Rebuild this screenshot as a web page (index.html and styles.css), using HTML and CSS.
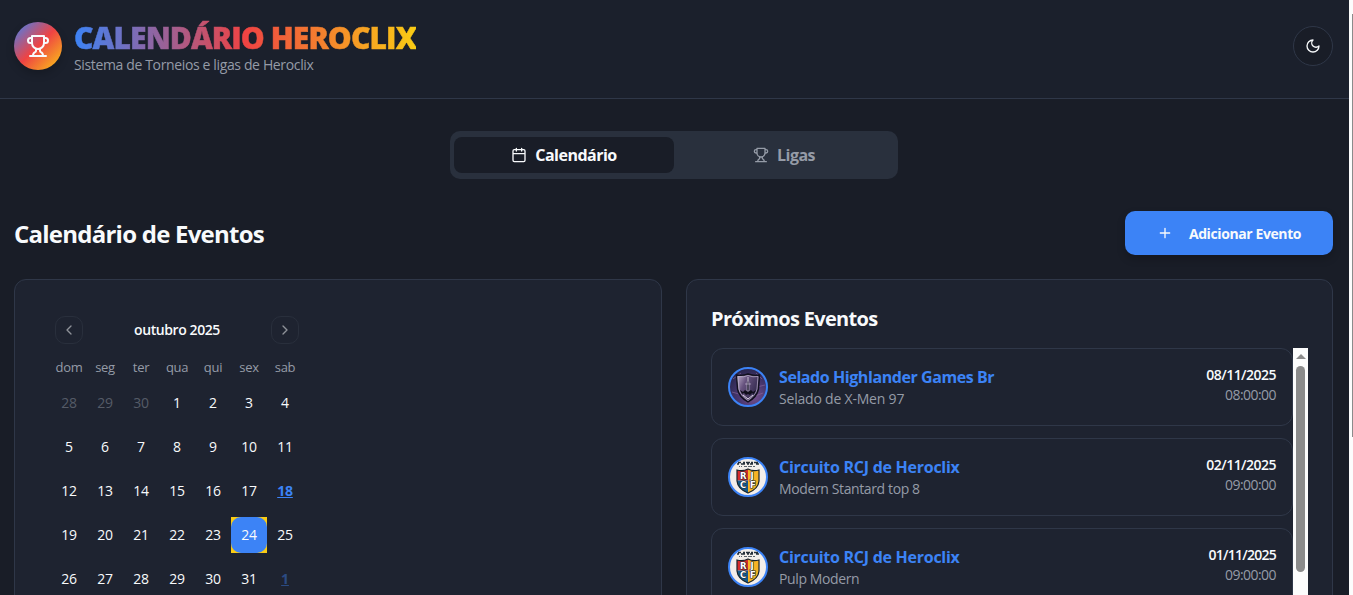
FILE: index.html
```html
<!DOCTYPE html>
<html lang="pt-BR">
<head>
<meta charset="utf-8">
<title>Calendário Heroclix</title>
<link rel="stylesheet" href="styles.css">
</head>
<body>
<svg width="0" height="0" class="defs">
  <defs>
    <symbol id="trophy" viewBox="0 0 24 24"><path d="M6 9H4.5a2.5 2.5 0 0 1 0-5H6M18 9h1.5a2.5 2.5 0 0 0 0-5H18M4 22h16M10 14.66V17c0 .55-.47.98-.97 1.21C7.85 18.75 7 20.24 7 22M14 14.66V17c0 .55.47.98.97 1.21C16.15 18.75 17 20.24 17 22M18 2H6v7a6 6 0 0 0 12 0V2Z"/></symbol>
    <radialGradient id="nebula" cx=".65" cy=".75" r=".8"><stop offset="0" stop-color="#75508c"/><stop offset=".5" stop-color="#47366f"/><stop offset="1" stop-color="#252448"/></radialGradient>
    <linearGradient id="steel" x2="1" y2=".6"><stop offset="0" stop-color="#c6b8d2"/><stop offset=".4" stop-color="#66527e"/><stop offset="1" stop-color="#2d2548"/></linearGradient>
    <clipPath id="crest"><path d="M9 13Q15 14.500 20 12Q25 14.500 31 13V24C30.500 30 25 34 20 36C15 34 9.500 30 9 24Z"/></clipPath>
    <symbol id="rcj" viewBox="0 0 40 40">
      <circle cx="20" cy="20" r="19" fill="#f3eeea" stroke="#3c83f6" stroke-width="2"/>
      <path d="M10 5.500h3M15 5.500h2M18 5.500h4M23 5.500h2M26 5.500h4M9 7h2M13 7h4M19 7h2M22 7h3M28 7h3" stroke="#26303a" stroke-width="1.300"/>
      <path d="M11 9.500h1M13 9.500h1M16 9.500h3M20 9.500h4M25 9.500h2" stroke="#5b636b"/>
      <g clip-path="url(#crest)"><path fill="#d72b2b" d="M8 11h12v12.500H8z"/><path fill="#f5b324" d="M20 11h12v26H20z"/><path fill="#155a8b" d="M8 23.500h12V37H8z"/></g>
      <path d="M9 13Q15 14.500 20 12Q25 14.500 31 13V24C30.500 30 25 34 20 36C15 34 9.500 30 9 24Z" fill="none" stroke="#17232b" stroke-width="1.200"/>
      <g class="crest-text"><text x="12" y="22">R</text><text x="22.500" y="22">J</text><text x="12" y="31">C</text><text x="22" y="31">F</text></g>
    </symbol>
  </defs>
</svg>
<header class="header">
  <div class="brand">
    <div class="logo"><svg class="icon icon-lg"><use href="#trophy"/></svg></div>
    <div class="brand-text">
      <h1><span>CALENDÁRIO HEROCLIX</span></h1>
      <p>Sistema de Torneios e ligas de Heroclix</p>
    </div>
  </div>
  <button class="theme"><svg class="icon" viewBox="0 0 24 24"><path d="M12 3a6 6 0 0 0 9 9 9 9 0 1 1-9-9Z"/></svg></button>
</header>
<main class="main">
  <nav class="tabs">
    <button class="tab active"><svg class="icon" viewBox="0 0 24 24"><path d="M8 2v4M16 2v4M3 10h18M5 4h14a2 2 0 0 1 2 2v14a2 2 0 0 1-2 2H5a2 2 0 0 1-2-2V6a2 2 0 0 1 2-2Z"/></svg><span>Calendário</span></button>
    <button class="tab"><svg class="icon"><use href="#trophy"/></svg><span>Ligas</span></button>
  </nav>
  <div class="heading">
    <h2>Calendário de Eventos</h2>
    <button class="add"><svg class="icon" viewBox="0 0 24 24"><path d="M5 12h14M12 5v14"/></svg><span>Adicionar Evento</span></button>
  </div>
  <div class="columns">
    <section class="card calendar">
      <div class="month">
        <button class="nav"><svg class="icon" viewBox="0 0 24 24"><path d="m15 18-6-6 6-6"/></svg></button>
        <strong>outubro 2025</strong>
        <button class="nav"><svg class="icon" viewBox="0 0 24 24"><path d="m9 18 6-6-6-6"/></svg></button>
      </div>
      <div class="week names"><span>dom</span><span>seg</span><span>ter</span><span>qua</span><span>qui</span><span>sex</span><span>sab</span></div>
      <div class="week"><span class="out">28</span><span class="out">29</span><span class="out">30</span><span>1</span><span>2</span><span>3</span><span>4</span></div>
      <div class="week"><span>5</span><span>6</span><span>7</span><span>8</span><span>9</span><span>10</span><span>11</span></div>
      <div class="week"><span>12</span><span>13</span><span>14</span><span>15</span><span>16</span><span>17</span><span class="event">18</span></div>
      <div class="week"><span>19</span><span>20</span><span>21</span><span>22</span><span>23</span><span class="today"><b>24</b></span><span>25</span></div>
      <div class="week"><span>26</span><span>27</span><span>28</span><span>29</span><span>30</span><span>31</span><span class="event faded">1</span></div>
    </section>
    <section class="card upcoming">
      <h3>Próximos Eventos</h3>
      <div class="scroll">
        <div class="list">
          <article class="item">
            <svg class="avatar" viewBox="0 0 40 40"><circle cx="20" cy="20" r="19" fill="url(#nebula)"/><path d="M5 12l8-6M28 6l6 6M4 25l7 2M27 29l8-3M29 20l8-2" stroke="#8e6aa0" opacity=".6"/><path d="M8.500 8Q15 9 20 7Q26 9 31.500 8L30.500 22Q29 30 20 35Q11 30 9.500 22Z" fill="url(#steel)" stroke="#11101e" stroke-width="1.400"/><path d="M10 9.500Q16 10.500 20 8.500Q25 10.500 30 9.500L29 22Q28 28 20 33.500Q12 28 11 22Z" fill="none" stroke="#c0b4cf" stroke-width=".7"/><path d="M20 10l1 7v7h-2v-7ZM17 17h6" fill="#17142a" stroke="#cfc3da" stroke-width=".6"/><path d="M12 23l3 2 2-2 3 2 3-2 2 2 3-2-2 4-2-1-2 2-2-1-2 1-2-2-2 1Z" fill="#0f0e1b"/><path d="M15 28l5 4 5-4" stroke="#ddd5e6" fill="none"/><circle cx="20" cy="20" r="19" fill="none" stroke="#3c83f6" stroke-width="2"/></svg>
            <div class="info"><h4>Selado Highlander Games Br</h4><p class="loose">Selado de X-Men 97</p></div>
            <div class="when"><strong>08/11/2025</strong><span>08:00:00</span></div>
          </article>
          <article class="item">
            <svg class="avatar"><use href="#rcj"/></svg>
            <div class="info"><h4 class="rcj-title">Circuito RCJ de Heroclix</h4><p>Modern Stantard top 8</p></div>
            <div class="when"><strong>02/11/2025</strong><span>09:00:00</span></div>
          </article>
          <article class="item">
            <svg class="avatar"><use href="#rcj"/></svg>
            <div class="info"><h4 class="rcj-title">Circuito RCJ de Heroclix</h4><p>Pulp Modern</p></div>
            <div class="when"><strong class="tight">01/11/2025</strong><span>09:00:00</span></div>
          </article>
        </div>
        <div class="bar"><i class="arrow"></i><i class="thumb"></i></div>
      </div>
    </section>
  </div>
</main>
<div class="page-bar"><i></i></div>
</body>
</html>
```
FILE: styles.css
```css
* { box-sizing: border-box; margin: 0; padding: 0; }
html, body { height: 595px; overflow: hidden; }
body { background: #191d27; color: #f8fafc; font-family: "Open Sans", "Noto Sans", sans-serif; position: relative; }
button { font: inherit; color: inherit; border: 0; background: none; display: flex; align-items: center; justify-content: center; }
.defs { position: absolute; }
.icon { width: 16px; height: 16px; fill: none; stroke: currentColor; stroke-width: 2; stroke-linecap: round; stroke-linejoin: round; flex: none; }
.icon-lg { width: 24px; height: 24px; }
h1, h2, h3, h4, p, .tab span, .add span { white-space: nowrap; }

.header { height: 99px; width: 1349px; padding: 20px 16px 0 14px; border-bottom: 1px solid #2f3748; background: #1b202c; display: flex; justify-content: space-between; }
.brand { display: flex; gap: 12px; }
.logo { width: 48px; height: 48px; margin-top: 2px; border-radius: 50%; background: linear-gradient(135deg, #3c83f6, #ef4343 50%, #facc14); display: flex; align-items: center; justify-content: center; box-shadow: 0 4px 8px rgba(0,0,0,.2); }
h1 { height: 35px; font-size: 30px; line-height: 35px; font-weight: 800; letter-spacing: -.88px; }
h1 span { display: inline-block; background: linear-gradient(90deg, #3c83f6, #ef4343 50%, #facc14); -webkit-background-clip: text; background-clip: text; color: transparent; -webkit-text-stroke: .5px transparent; }
.brand p { font-size: 14px; line-height: 20px; letter-spacing: -.36px; color: #959ba7; }
.theme { width: 40px; height: 40px; margin-top: 6px; border: 1px solid #2f3748; border-radius: 50%; background: #191d27; }

.main { width: 1349px; height: 496px; padding: 32px 16px 0 14px; overflow: hidden; }
.tabs { width: 448px; height: 48px; margin: 0 auto 0 436px; padding: 4px; border-radius: 10px; background: #29303d; display: grid; grid-template-columns: 1fr 1fr; align-items: center; }
.tab { height: 36px; border-radius: 8px; gap: 8px; font-size: 16px; font-weight: 700; letter-spacing: -.5px; color: #959ba7; }
.tab.active { background: #191d27; color: #f8fafc; }
.heading { height: 44px; margin-top: 32px; display: flex; justify-content: space-between; align-items: center; }
h2 { font-size: 24px; line-height: 32px; font-weight: 700; letter-spacing: -.76px; padding-top: 1px; }
.add { width: 208px; height: 44px; border-radius: 10px; background: #3c83f6; gap: 16px; font-size: 14px; font-weight: 700; letter-spacing: -.4px; box-shadow: 0 4px 8px rgba(0,0,0,.2); }

.columns { margin-top: 24px; display: grid; grid-template-columns: 648px 647px; gap: 24px; }
.card { height: 360px; border: 1px solid #2f3748; border-radius: 12px; background: #1e2330; }
.calendar { padding: 36px 40px; }
.month { width: 244px; height: 28px; display: flex; justify-content: space-between; align-items: center; font-size: 14px; }
.month strong { font-weight: 600; letter-spacing: -.42px; padding-bottom: 2px; }
.nav { width: 28px; height: 28px; border: 1px solid #292f3c; border-radius: 10px; color: #8f9299; }
.week { width: 252px; height: 36px; margin: 8px 0 0 -4px; display: grid; grid-template-columns: repeat(7, 36px); line-height: 36px; text-align: center; font-size: 14px; letter-spacing: -.2px; }
.names { height: 20px; margin-top: 13px; line-height: 20px; font-size: 13px; letter-spacing: -.3px; color: #959ba7; }
.names + .week { margin-top: 8px; }
.out { color: #555b67; }
.event { color: #3c83f6; font-weight: 700; text-decoration: underline; }
.faded { color: #2b4b83; }
.today { background: #facc14; }
.today b { display: block; height: 36px; font-weight: 400; border-radius: 10px; background: #3c83f6; }

.upcoming { padding: 23px 24px; }
h3 { font-size: 20px; line-height: 32px; font-weight: 700; letter-spacing: -.68px; }
.scroll { height: 270px; margin-top: 13px; display: grid; grid-template-columns: 582px 15px; overflow: hidden; }
.list { display: flex; flex-direction: column; gap: 12px; }
.item { height: 78px; flex: none; border: 1px solid #2f3748; border-radius: 12px; padding: 0 16px; display: flex; align-items: center; }
.avatar { width: 40px; height: 40px; flex: none; }
.crest-text { font: 700 8.5px "DejaVu Sans", sans-serif; fill: #fff; stroke: #17232b; stroke-width: 1.2px; paint-order: stroke; }
.info { margin-left: 11px; flex: 1; }
h4 { font-size: 16px; line-height: 23px; font-weight: 700; letter-spacing: -.43px; color: #3c83f6; }
.rcj-title { letter-spacing: -.27px; }
.info p { font-size: 14px; line-height: 20px; letter-spacing: -.38px; color: #959ba7; }
.info .loose { letter-spacing: -.2px; }
.when { text-align: right; font-size: 14px; line-height: 20px; margin-top: -4px; }
.when strong, .when span { display: block; }
.when strong { font-weight: 600; letter-spacing: -.52px; }
.when .tight { letter-spacing: -.75px; }
.when span { letter-spacing: -.55px; color: #959ba7; }
.bar { background: #fcfcfc; display: flex; flex-direction: column; align-items: center; padding-top: 6px; }
.arrow { border: 5px solid transparent; border-top: 0; border-bottom: 5px solid #8b8b8b; }
.thumb { width: 9px; height: 206px; margin-top: 7px; border-radius: 5px; background: #8b8b8b; }
.page-bar { position: absolute; right: 0; top: 0; width: 4px; height: 595px; background: #fcfcfc; display: flex; justify-content: flex-end; padding-top: 14px; }
.page-bar i { width: 1px; height: 423px; background: #8b8b8b; }
```
